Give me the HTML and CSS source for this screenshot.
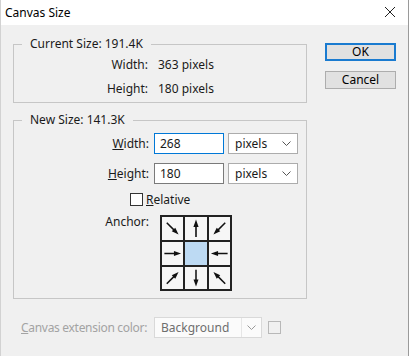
FILE: index.html
```html
<!DOCTYPE html>
<html lang="en">
	<head>
		<meta name="viewport" content="width=device-width, initial-scale=1" />
		<title>Canvas Size</title>
		<link rel="stylesheet" href="styles.css">
	</head>
	<body>
		<svg width="0" height="0" class="defs">
			<symbol id="arrow" viewBox="0 0 22 23">
				<line x1="11" y1="8" x2="11" y2="20" stroke="#111" stroke-width="1.6" />
				<polygon points="11,2.5 8.4,10 13.6,10" fill="#111" />
			</symbol>
			<symbol id="chevron" viewBox="0 0 9 5">
				<polyline points="0.5,0.5 4.5,4.5 8.5,0.5" fill="none" stroke="currentColor" stroke-width="1" />
			</symbol>
		</svg>
		<div class="window">
			<div class="titlebar">
				<span>Canvas Size</span>
				<svg class="close" width="10" height="10" viewBox="0 0 10 10">
					<line x1="0" y1="0" x2="10" y2="10" stroke="#222" stroke-width="1" />
					<line x1="10" y1="0" x2="0" y2="10" stroke="#222" stroke-width="1" />
				</svg>
			</div>
			<div class="content">
				<div class="main">
					<fieldset class="group current">
						<legend>Current Size: 191.4K</legend>
						<div class="info"><span class="lbl">Width:</span><span>363 pixels</span></div>
						<div class="info"><span class="lbl">Height:</span><span>180 pixels</span></div>
					</fieldset>
					<fieldset class="group new">
						<legend>New Size: 141.3K</legend>
						<div class="field">
							<label class="lbl"><u>W</u>idth:</label>
							<div class="input focused">268</div>
							<div class="select">pixels<svg class="chev" width="9" height="5"><use href="#chevron" /></svg></div>
						</div>
						<div class="field">
							<label class="lbl"><u>H</u>eight:</label>
							<div class="input">180</div>
							<div class="select">pixels<svg class="chev" width="9" height="5"><use href="#chevron" /></svg></div>
						</div>
						<div class="check-row">
							<span class="box"></span>
							<span><u>R</u>elative</span>
						</div>
						<div class="anchor-row">
							<span class="lbl">Anchor:</span>
							<div class="anchor">
								<div class="cell"><svg viewBox="0 0 22 23"><use href="#arrow" transform="rotate(135 11 11.5)" /></svg></div>
								<div class="cell"><svg viewBox="0 0 22 23"><use href="#arrow" /></svg></div>
								<div class="cell"><svg viewBox="0 0 22 23"><use href="#arrow" transform="rotate(225 11 11.5)" /></svg></div>
								<div class="cell"><svg viewBox="0 0 22 23"><use href="#arrow" transform="rotate(90 11 11.5)" /></svg></div>
								<div class="cell center"></div>
								<div class="cell"><svg viewBox="0 0 22 23"><use href="#arrow" transform="rotate(270 11 11.5)" /></svg></div>
								<div class="cell"><svg viewBox="0 0 22 23"><use href="#arrow" transform="rotate(45 11 11.5)" /></svg></div>
								<div class="cell"><svg viewBox="0 0 22 23"><use href="#arrow" transform="rotate(180 11 11.5)" /></svg></div>
								<div class="cell"><svg viewBox="0 0 22 23"><use href="#arrow" transform="rotate(315 11 11.5)" /></svg></div>
							</div>
						</div>
					</fieldset>
					<div class="ext">
						<span class="ext-label"><u>C</u>anvas extension color:</span>
						<div class="ext-select">
							<span class="ext-value">Background</span>
							<span class="ext-arrow"><svg width="9" height="5"><use href="#chevron" /></svg></span>
						</div>
						<span class="ext-swatch"></span>
					</div>
				</div>
				<div class="buttons">
					<div class="btn default">OK</div>
					<div class="btn">Cancel</div>
				</div>
			</div>
		</div>
	</body>
</html>
```

FILE: styles.css
```css
body {
	margin: 0;
	font: normal 12px "Noto Sans", Arial, sans-serif;
	color: #1a1a1a;
}
.defs {
	position: absolute;
}
.window {
	width: 409px;
	height: 356px;
	box-sizing: border-box;
	background-color: #f0f0f0;
	border-left: 1px solid #d2d2d2;
	border-right: 1px solid #9a9a9a;
	overflow: hidden;
}
.titlebar {
	height: 25px;
	background-color: #fff;
	display: flex;
	align-items: center;
	justify-content: space-between;
	padding: 0 13px 0 4px;
	color: #000;
}
.close {
	margin-top: -1px;
}
.content {
	display: flex;
	gap: 18px;
	padding: 11px 0 0 12px;
}
.main {
	width: 294px;
}
.group {
	margin: 0;
	padding: 0;
	min-width: 0;
	border: 1px solid #c6c6c6;
}
.group legend {
	margin-left: 8px;
	padding: 0 8px;
	line-height: 16px;
}
.lbl {
	text-align: right;
}
.current {
	padding: 1px 0 1px;
}
.info {
	display: grid;
	grid-template-columns: 134px auto;
	column-gap: 10px;
	line-height: 24px;
}
.new {
	margin-top: 9px;
	padding: 5px 0 7px;
}
.field {
	display: flex;
	align-items: center;
	height: 21px;
	margin-bottom: 9px;
}
.field .lbl {
	width: 135px;
	margin-right: 5px;
}
.input {
	width: 70px;
	height: 21px;
	box-sizing: border-box;
	border: 1px solid #7a7a7a;
	background-color: #fff;
	padding-left: 5px;
	line-height: 19px;
}
.input.focused {
	border-color: #0078d7;
}
.select {
	width: 70px;
	height: 21px;
	box-sizing: border-box;
	margin-left: 4px;
	border: 1px solid #acacac;
	background-color: #fff;
	display: flex;
	align-items: center;
	justify-content: space-between;
	padding: 0 6px 0 6px;
}
.chev {
	color: #555;
}
.check-row {
	display: flex;
	align-items: center;
	height: 13px;
	padding-left: 116px;
	gap: 3px;
}
.box {
	width: 13px;
	height: 13px;
	box-sizing: border-box;
	border: 1px solid #333;
	background-color: #fff;
}
.anchor-row {
	display: flex;
	margin-top: 9px;
}
.anchor-row .lbl {
	width: 135px;
	margin-right: 11px;
	line-height: 14px;
}
.anchor {
	display: grid;
	grid-template-columns: 23px 24px 23px;
	grid-template-rows: 25px 25px 24px;
	border: 1px solid #222;
}
.cell {
	border: 1px solid #222;
	background-color: #f6f6f6;
	display: flex;
}
.cell svg {
	width: 100%;
	height: 100%;
}
.cell.center {
	background-color: #bddaf3;
}
.ext {
	display: flex;
	align-items: center;
	margin-top: 18px;
	padding-left: 8px;
}
.ext-label {
	width: 133px;
	white-space: nowrap;
	letter-spacing: -0.3px;
	color: #a3a3a3;
}
.ext-select {
	width: 108px;
	height: 21px;
	box-sizing: border-box;
	border: 1px solid #d9d9d9;
	background-color: #fbfbfb;
	display: flex;
}
.ext-value {
	flex: 1;
	padding-left: 6px;
	line-height: 19px;
	color: #6e6e6e;
}
.ext-arrow {
	width: 19px;
	border-left: 1px solid #e6e6e6;
	display: flex;
	align-items: center;
	justify-content: center;
	color: #9a9a9a;
}
.ext-swatch {
	width: 13px;
	height: 13px;
	box-sizing: border-box;
	margin-left: 6px;
	border: 1px solid #b8b8b8;
}
.buttons {
	margin-top: 7px;
	width: 71px;
}
.btn {
	height: 18px;
	box-sizing: border-box;
	margin-bottom: 10px;
	border: 1px solid #adadad;
	background-color: #e1e1e1;
	text-align: center;
	line-height: 16px;
	color: #000;
}
.btn.default {
	border: 2px solid #1a7bd0;
	line-height: 14px;
}
```
